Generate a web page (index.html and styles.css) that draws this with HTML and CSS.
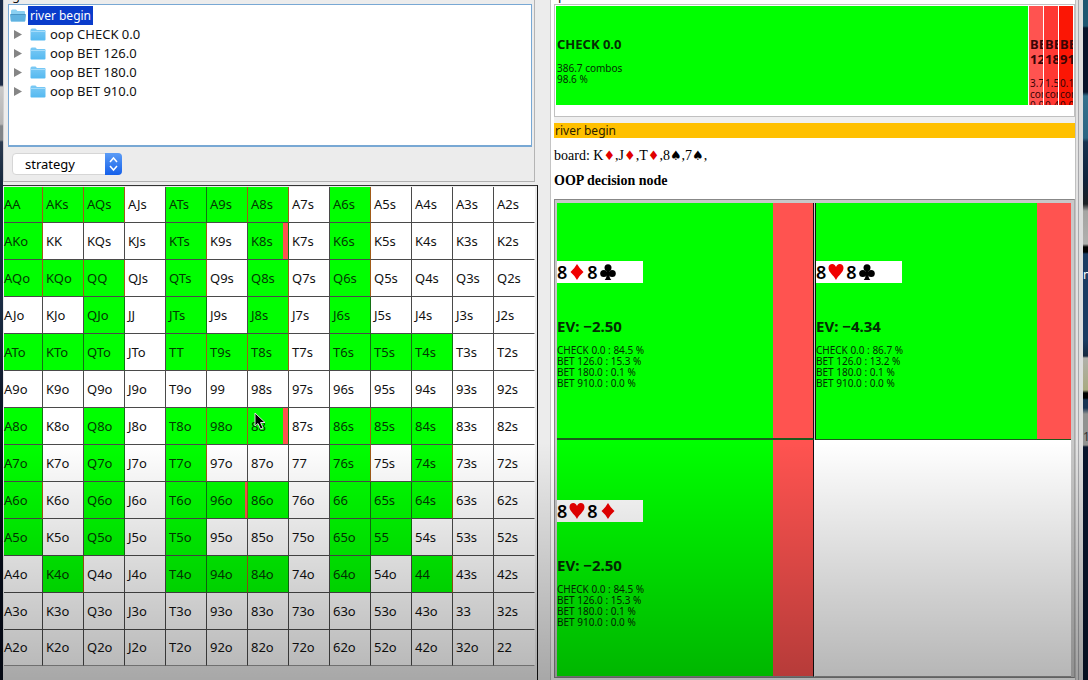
FILE: index.html
```html
<!DOCTYPE html>
<html lang="en">
<head>
<meta charset="utf-8">
<title>River solver</title>
<link rel="stylesheet" href="styles.css">
</head>
<body>
<svg class="defs" aria-hidden="true">
  <defs>
    <linearGradient id="folderFill" x1="0" y1="0" x2="0" y2="1">
      <stop offset="0" stop-color="#7ccaf5"/><stop offset="1" stop-color="#55b9f0"/>
    </linearGradient>
    <symbol id="folder" viewBox="0 0 16 13">
      <path d="M0.5 2q0-1.500 1.500-1.500h3.500l1.500 1.500h7.500q1 0 1 1v8.500q0 1-1 1h-13q-1 0-1-1z" fill="url(#folderFill)"/>
      <path d="M0.500 3.500h15" stroke="#a5dcfa" stroke-width="1"/>
    </symbol>
    <symbol id="folder-open" viewBox="0 0 16 13">
      <path d="M1 2q0-1.500 1.500-1.500h3.500l1.500 1.500h6.500q1 0 1 1v9.500h-14z" fill="#8ad0f2"/>
      <path d="M0 5.500h16l-0.600 6q-0.100 1-1 1h-12.800q-0.900 0-1-1z" fill="#5fb2e0"/>
      <path d="M0.500 5.500h15" stroke="#4a96c4" stroke-width="1"/>
    </symbol>
    <symbol id="diamond" viewBox="0 0 20 18">
      <path d="M10 1Q12.500 5.500 16.500 9Q12.500 12.500 10 17Q7.500 12.500 3.500 9Q7.500 5.500 10 1z" fill="#f00000"/>
    </symbol>
    <symbol id="heart" viewBox="0 0 20 18">
      <path d="M10 17C8 12.500 2.500 9.500 2.500 5C2.500 2.500 4.200 1 6.200 1C8.200 1 9.500 2.500 10 4C10.500 2.500 11.800 1 13.800 1C15.800 1 17.500 2.500 17.500 5C17.500 9.500 12 12.500 10 17z" fill="#f00000"/>
    </symbol>
    <symbol id="club" viewBox="0 0 20 18">
      <circle cx="10" cy="4.800" r="3.500"/><circle cx="5.800" cy="10.500" r="3.600"/><circle cx="14.200" cy="10.500" r="3.600"/>
      <path d="M9 7h2l0.300 5q0.300 3.500 2 5h-6.600q1.700-1.500 2-5z"/>
    </symbol>
  </defs>
</svg>

<div class="desktop desktop-left"></div>

<main class="pane pane-left">
  <section class="controls">
    <div class="cut-label" aria-hidden="true"><span>g</span></div>
    <ul class="tree">
      <li class="tree-row root"><svg class="folder"><use href="#folder-open"/></svg><span class="node selected">river begin</span></li>
      <li class="tree-row"><svg class="twisty" viewBox="0 0 8 9"><path d="M0 0l8 4.500l-8 4.500z"/></svg><svg class="folder"><use href="#folder"/></svg><span class="node">oop CHECK 0.0</span></li>
      <li class="tree-row"><svg class="twisty" viewBox="0 0 8 9"><path d="M0 0l8 4.500l-8 4.500z"/></svg><svg class="folder"><use href="#folder"/></svg><span class="node">oop BET 126.0</span></li>
      <li class="tree-row"><svg class="twisty" viewBox="0 0 8 9"><path d="M0 0l8 4.500l-8 4.500z"/></svg><svg class="folder"><use href="#folder"/></svg><span class="node">oop BET 180.0</span></li>
      <li class="tree-row"><svg class="twisty" viewBox="0 0 8 9"><path d="M0 0l8 4.500l-8 4.500z"/></svg><svg class="folder"><use href="#folder"/></svg><span class="node">oop BET 910.0</span></li>
    </ul>
    <div class="picker">
      <select aria-label="Display mode"><option>strategy</option></select>
      <svg class="picker-arrows" viewBox="0 0 17 22"><path d="M5 9l3.500-4l3.500 4M5 13l3.500 4l3.500-4"/></svg>
    </div>
  </section>
  <section class="range">
    <table class="matrix">
      <colgroup><col class="first-col"><col span="12"></colgroup>
      <tbody id="matrix"></tbody>
    </table>
  </section>
</main>

<section class="pane pane-right">
  <div class="cut-label" aria-hidden="true"><span>p</span></div>
  <section class="summary">
    <div class="bar check"><b>CHECK 0.0</b><p>386.7 combos<br>98.6 %</p></div>
    <div class="bar bet-small"><b>BET 126.0</b><p>3.7 combos<br>0.9 %</p></div>
    <div class="bar bet-medium"><b>BET 180.0</b><p>1.5 combos<br>0.4 %</p></div>
    <div class="bar bet-large"><b>BET 910.0</b><p>0.1 combos<br>0.0 %</p></div>
  </section>
  <section class="info">
    <h2 class="node-title">river begin</h2>
    <p class="board">board: K<i class="suit red">♦</i>,J<i class="suit red">♦</i>,T<i class="suit red">♦</i>,8<i class="suit">♠</i>,7<i class="suit">♠</i>,</p>
    <h3 class="decision">OOP decision node</h3>
  </section>
  <section class="hands">
    <article class="hand" style="--check: 84.5%">
      <div class="cards">8<svg role="img" aria-label="diamonds"><use href="#diamond"/></svg>8<svg role="img" aria-label="clubs"><use href="#club"/></svg></div>
      <h4>EV: −2.50</h4>
      <p>CHECK 0.0 : 84.5 %<br>BET 126.0 : 15.3 %<br>BET 180.0 : 0.1 %<br>BET 910.0 : 0.0 %</p>
    </article>
    <article class="hand" style="--check: 86.7%">
      <div class="cards">8<svg role="img" aria-label="hearts"><use href="#heart"/></svg>8<svg role="img" aria-label="clubs"><use href="#club"/></svg></div>
      <h4>EV: −4.34</h4>
      <p>CHECK 0.0 : 86.7 %<br>BET 126.0 : 13.2 %<br>BET 180.0 : 0.1 %<br>BET 910.0 : 0.0 %</p>
    </article>
    <article class="hand" style="--check: 84.5%">
      <div class="cards">8<svg role="img" aria-label="hearts"><use href="#heart"/></svg>8<svg role="img" aria-label="diamonds"><use href="#diamond"/></svg></div>
      <h4>EV: −2.50</h4>
      <p>CHECK 0.0 : 84.5 %<br>BET 126.0 : 15.3 %<br>BET 180.0 : 0.1 %<br>BET 910.0 : 0.0 %</p>
    </article>
    <div class="hand empty"></div>
  </section>
</section>

<div class="desktop desktop-right"><span class="scrap scrap-n">n</span><span class="scrap scrap-one">1</span></div>
<div class="shade"></div>
<script src="app.js"></script>
</body>
</html>
```

FILE: styles.css
```css
* { box-sizing: border-box; }

body {
  margin: 0;
  min-height: 100vh;
  display: grid;
  grid-template-columns: 3px 547fr 533fr 5px;
  position: relative;
  overflow: hidden;
  background: #ececec;
  color: #111;
  font: 13px/19px "Noto Sans", "Open Sans", sans-serif;
}

p, h2, h3, h4, ul { margin: 0; padding: 0; }

.defs { position: absolute; width: 0; height: 0; }

/* Desktop slivers on both sides of the window */
.desktop { position: relative; overflow: hidden; }
.desktop-left {
  background: linear-gradient(#1c2c48 85px, #c8c8c8 87px, #b4b4b4 124px, #808488 126px, #808488 140px, #2b3b50 142px, #14263c 185px, #1a2c44 300px, #060c1a 460px);
}
.desktop-right {
  background: linear-gradient(#1d5670 26px, #08142a 28px, #08142a 92px, #35708c 96px, #2c6582 138px, #17324f 142px, #10233c 180px, #1c2024 204px, #a4a4a2 211px, #b0b0ae 244px, #000 247px, #000 252px, #1b3c62 254px, #1b3c62 340px, #15283e 356px, #b0b0aa 358px, #a8aa80 390px, #000 393px, #000 398px, #183454 400px, #183454 408px, #909290 414px, #909290 445px, #08152c 447px);
}
.scrap { position: absolute; left: 0; font-size: 12px; line-height: 16px; }
.scrap-n { top: 267px; color: #fff; }
.scrap-one { top: 429px; color: #333; }

/* Darkening towards the bottom of the screen */
.shade {
  position: absolute;
  inset: 0;
  pointer-events: none;
  background: linear-gradient(transparent 65%, rgba(0, 0, 0, 0.29) 100%);
}

.pane { display: flex; flex-direction: column; min-width: 0; }
.pane-left { padding-right: 12px; }
.pane-right {
  padding: 0 8px 2px 3px;
  border-left: 1px solid #c4c4c4;
  background: linear-gradient(to left, #dedede 4px, #a8a8ac 4px, #a8a8ac 5px, #e2e2e2 5px, #e2e2e2 7px, #c0c0c0 7px, #c0c0c0 8px, #fff 8px);
}

.cut-label {
  flex: none;
  height: 4px;
  display: flex;
  align-items: flex-end;
  padding-left: 4px;
  overflow: hidden;
  font-size: 13px;
  line-height: 18px;
}

/* Tree and mode picker */
.controls {
  margin-right: 3px;
  padding: 0 2px 5px 4px;
  border-right: 1px solid #b4b4b4;
  border-bottom: 1px solid #b0b0b0;
  border-left: 1px solid #d0d0d0;
}
.tree {
  min-height: 143px;
  padding: 1px 1px 0;
  list-style: none;
  background: #fff;
  border: 1px solid #78a8d4;
  border-bottom-width: 2px;
}
.tree-row { display: flex; align-items: center; height: 19px; padding-left: 4px; }
.tree-row.root { padding-left: 0; }
.twisty { width: 8px; height: 9px; margin-right: 8px; fill: #858585; }
.folder { width: 16px; height: 13px; margin-right: 2px; }
.node { padding: 0 2px; color: #111; }
.node.selected { background: #0a3ccb; color: #fff; font-size: 12px; }

.picker { position: relative; width: 110px; margin: 6px 0 0 4px; padding-bottom: 1px; }
.picker select {
  display: block;
  width: 100%;
  height: 22px;
  padding: 0 20px 0 12px;
  appearance: none;
  border: 1px solid #d6d6d6;
  border-radius: 4px;
  background: #fff;
  color: #000;
  font: inherit;
}
.picker-arrows {
  position: absolute;
  top: 0;
  right: 0;
  width: 17px;
  height: 22px;
  border-radius: 0 4px 4px 0;
  background: linear-gradient(#5b9cf6, #1560ea);
  fill: none;
  stroke: #fff;
  stroke-width: 1.5;
  pointer-events: none;
}

/* Starting-hand matrix */
.range {
  flex: 1;
  margin-top: 3px;
  padding: 1px 2px 0 1px;
  border-top: 1px solid #333;
  border-right: 1px solid #111;
}
.matrix {
  width: 100%;
  table-layout: fixed;
  border-collapse: separate;
  border-spacing: 0;
  background: #fff;
}
.first-col { width: 39px; }
.matrix td {
  position: relative;
  height: 37px;
  padding: 0 0 0 3px;
  border-right: 1px solid #4a4a4a;
  border-bottom: 1px solid #4a4a4a;
  color: #111;
}
.matrix tr:first-child td { height: 36px; }
.matrix td:first-child { padding-left: 0; }
.matrix td:last-child { border-right-color: #fff; }
.matrix tr:last-child td { height: 36px; border-bottom-color: #999; }
.matrix .on {
  background: linear-gradient(to left, #ff5350 var(--bet, 0), #00ff00 var(--bet, 0));
  color: #033803;
  border-right-color: #147014;
}
.matrix .on.trace { border-right-color: #a05a18; }
.cursor { position: absolute; top: 4px; left: 6px; width: 12px; height: 18px; }

/* Overall action split */
.summary {
  display: flex;
  gap: 1px;
  height: 113px;
  padding: 1px 1px 11px;
  border: 1px solid #c0c0c0;
  background: #fff;
}
.bar {
  flex: none;
  width: 14px;
  padding: 31px 0 0 1px;
  overflow: hidden;
  line-height: 15px;
  color: #3a0505;
}
.bar p { margin-top: 11px; font-size: 10px; line-height: 11px; }
.check { flex: 1; background: #00ff00; color: #042c04; }
.bet-small { background: #ff5350; }
.bet-medium { background: #ff3833; }
.bet-large { background: #fb1605; }

.info { border-top: 6px solid #efefef; padding-bottom: 8px; color: #000; font: 14px/20px "Liberation Serif", serif; }
.node-title {
  padding-left: 1px;
  background: #ffc000;
  color: #2c2000;
  font: 12px/15px "Noto Sans", sans-serif;
}
.board { margin-top: 8px; }
.suit { font: 13px/14px "DejaVu Sans", sans-serif; }
.suit.red { color: #e00000; }
.decision { margin-top: 5px; font-size: 14px; line-height: 20px; }

/* Per-combo strategy */
.hands {
  flex: 1;
  display: grid;
  grid-template-columns: 1fr 1fr;
  grid-template-rows: 1fr 1fr;
  padding: 3px 3px 0 2px;
  border: 1px solid #888;
  border-right-color: #aaa;
  background: #c8c8c8;
}
.hand {
  padding: 58px 0 24px;
  border-bottom: 2px solid #1b5a1b;
  border-right: 1px solid #111;
  background: linear-gradient(to right, #00ff00 var(--check), #ff5350 var(--check));
  color: #042c04;
}
.hand:nth-child(even) {
  margin-left: 1px;
  border-right: 0;
  border-left: 1px solid #111;
}
.hand:nth-child(2) { border-bottom-width: 1px; }
.hand:nth-child(n + 3) { padding: 60px 0 22px; border-bottom: 1px solid #999; }
.hand.empty { margin-left: 0; background: #fff; border-left-color: #fff; }
.cards {
  display: flex;
  align-items: center;
  width: 86px;
  height: 22px;
  background: #fff;
  color: #000;
  font-size: 18px;
  font-weight: 600;
}
.cards svg { width: 20px; height: 18px; }
.hand h4 { margin-top: 33px; font-size: 15px; line-height: 20px; }
.hand p { margin-top: 9px; font-size: 10px; line-height: 11px; }
```

FILE: app.js
```js
const ranks = "AKQJT98765432";

// One character per cell: "." not in range, "g" checks, "t" checks with a trace of betting,
// "b" visible bet share, "n" narrow bet share.
const rows = [
  "ttt.gtt.t....",
  "t...t.b.t....",
  "ttt.t.t.t....",
  "..g.g.t.g....",
  "ggg.ttt.ggg..",
  ".............",
  "g.g.ttb.tgg..",
  "g.g.t...t.t..",
  "t.g.gng.ggt..",
  "g.g.g...gg...",
  ".t..gtg.g.t..",
  ".............",
  "............."
];
const betWidth = { b: "5px", n: "2px" };
const cursor = '<svg class="cursor" viewBox="0 0 12 18"><path d="M1 1v13l3-2.500l2.500 5.500l2.500-1l-2.500-5.500h4.500z" fill="#000" stroke="#ddd" stroke-width="1"/></svg>';

const body = document.getElementById("matrix");
rows.forEach((row, r) => {
  const tr = body.insertRow();
  [...row].forEach((state, c) => {
    const td = tr.insertCell();
    const high = ranks[Math.min(r, c)];
    const low = ranks[Math.max(r, c)];
    td.textContent = high + low + (r === c ? "" : r < c ? "s" : "o");
    if (state !== ".") td.classList.add("on");
    if ("tn".includes(state)) td.classList.add("trace");
    if (betWidth[state]) td.style.setProperty("--bet", betWidth[state]);
    if (r === 6 && c === 6) td.insertAdjacentHTML("beforeend", cursor);
  });
});
```
